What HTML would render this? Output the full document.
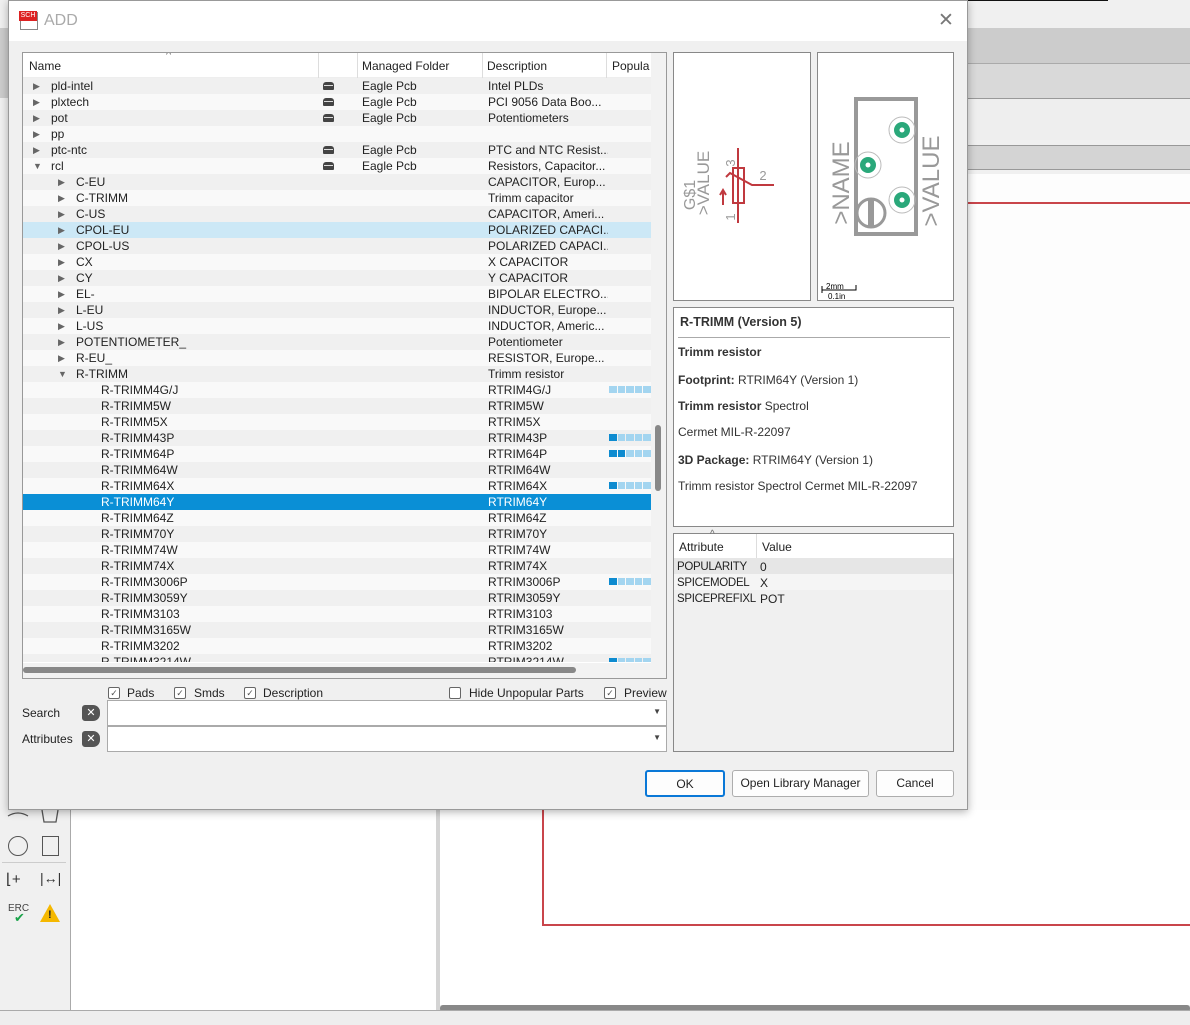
<!DOCTYPE html>
<html><head><meta charset="utf-8"><style>
*{margin:0;padding:0;box-sizing:border-box}
body{width:1190px;height:1025px;position:relative;overflow:hidden;background:#f0f0f0;font-family:"Liberation Sans","DejaVu Sans",sans-serif;font-size:12px;color:#222}
.a{position:absolute}
.r{position:absolute;left:0;width:628px;height:16px;line-height:16px;white-space:nowrap}
.r span{position:absolute;top:0}
.r .t{font-size:9px;color:#666}
.r .d{left:465px;width:120px;overflow:hidden}
.r .m{left:339px}
.r .k{left:300px;top:4px;width:11px;height:8px;background:#444;border-radius:3px 3px 1px 1px}
.r .k:after{content:"";position:absolute;left:1px;top:3px;width:9px;height:1px;background:#ddd}
.e{background:#f0f0f0}.o{background:#f9f9f9}
.p{position:absolute;left:586px;top:4px;height:7px;width:42px;display:flex;gap:1px}
.p i{flex:1;background:#a3d5f0}.p i.b{background:#0d8bd0}
.chk{position:absolute;width:12px;height:12px;border:1px solid #666;border-radius:2px;background:#fff;font-size:9px;line-height:10px;text-align:center;color:#555}
.btn{position:absolute;height:27px;border:1px solid #adadad;border-radius:3px;background:#fdfdfd;text-align:center;line-height:25px}
</style></head><body>
<!-- background app -->
<div class="a" style="left:808px;top:0;width:300px;height:1px;background:#111"></div>
<div class="a" style="left:968px;top:28px;width:222px;height:36px;background:#ccc;border-bottom:1px solid #aaa"></div>
<div class="a" style="left:968px;top:64px;width:222px;height:35px;background:#d9d9d9;border-bottom:1px solid #999"></div>
<div class="a" style="left:968px;top:99px;width:222px;height:41px;background:#eee"></div>
<div class="a" style="left:968px;top:145px;width:222px;height:25px;background:#d4d4d4;border-top:1px solid #999;border-bottom:1px solid #999"></div>
<div class="a" style="left:968px;top:174px;width:222px;height:830px;background:#fdfdfd"></div>
<div class="a" style="left:968px;top:202px;width:222px;height:2px;background:#c9454b"></div>
<div class="a" style="left:0;top:28px;width:8px;height:70px;background:#ccc"></div>
<div class="a" style="left:70px;top:810px;width:366px;height:200px;background:#fff;border-left:1px solid #aaa"></div>
<div class="a" style="left:436px;top:810px;width:4px;height:200px;background:#d4d4d4"></div>
<div class="a" style="left:440px;top:810px;width:750px;height:195px;background:#fff"></div>
<div class="a" style="left:542px;top:810px;width:2px;height:116px;background:#c9454b"></div>
<div class="a" style="left:543px;top:924px;width:647px;height:2px;background:#c9454b"></div>
<div class="a" style="left:440px;top:1005px;width:750px;height:7px;background:#888;border-radius:3px"></div>
<div class="a" style="left:0;top:1010px;width:1190px;height:15px;background:#eee;border-top:1px solid #aaa"></div>
<svg class="a" style="left:0;top:808px" width="70" height="22"><path d="M8 8 Q18 2 28 8" stroke="#555" fill="none" stroke-width="1.3"/><path d="M42 2 L44 14 L56 14 L58 2" stroke="#555" fill="none" stroke-width="1.3"/></svg>
<div class="a" style="left:2px;top:862px;width:64px;height:1px;background:#ccc"></div>
<div class="a" style="left:8px;top:836px;width:20px;height:20px;border:1.5px solid #555;border-radius:50%"></div>
<div class="a" style="left:42px;top:836px;width:17px;height:20px;border:1.5px solid #555"></div>
<div class="a" style="left:6px;top:870px;font-size:15px;color:#333">⌊+</div>
<div class="a" style="left:40px;top:870px;font-size:14px;color:#333">|↔|</div>
<div class="a" style="left:8px;top:903px;font-size:10px;color:#444">ERC</div>
<div class="a" style="left:14px;top:910px;font-size:13px;color:#1aa34a;font-weight:bold">✔</div>
<div class="a" style="left:40px;top:904px;width:0;height:0;border-left:10px solid transparent;border-right:10px solid transparent;border-bottom:18px solid #f5b800"></div>
<div class="a" style="left:48px;top:909px;font-size:11px;font-weight:bold">!</div>

<!-- dialog -->
<div class="a" style="left:8px;top:0;width:960px;height:810px;background:#f0f0f0;border:1px solid #999;box-shadow:0 2px 8px rgba(0,0,0,.3)">
<div class="a" style="left:0;top:0;width:958px;height:40px;background:#fff"></div>
<div class="a" style="left:11px;top:11px;width:18px;height:18px;border:1px solid #888;background:#fff"></div>
<div class="a" style="left:10px;top:10px;width:18px;height:10px;background:#d22;color:#fff;font-size:7px;line-height:10px;text-align:center">SCH</div>
<div class="a" style="left:35px;top:11px;font-size:16px;color:#aaa">ADD</div>
<div class="a" style="left:929px;top:8px;font-size:19px;color:#777">✕</div>
</div>

<!-- tree -->
<div class="a" style="left:22px;top:52px;width:645px;height:627px;background:#fff;border:1px solid #999;overflow:hidden">
<div class="a" style="left:0;top:0;width:643px;height:25px;background:#fff;border-bottom:1px solid #eee"></div>
<div class="a" style="left:6px;top:6px">Name</div>
<div class="a" style="left:143px;top:-4px;color:#666;font-size:11px">^</div>
<div class="a" style="left:295px;top:0;width:1px;height:25px;background:#ddd"></div>
<div class="a" style="left:334px;top:0;width:1px;height:25px;background:#ddd"></div>
<div class="a" style="left:339px;top:6px">Managed Folder</div>
<div class="a" style="left:459px;top:0;width:1px;height:25px;background:#ddd"></div>
<div class="a" style="left:464px;top:6px">Description</div>
<div class="a" style="left:583px;top:0;width:1px;height:25px;background:#ddd"></div>
<div class="a" style="left:589px;top:6px">Popula</div>
<div class="a" style="left:628px;top:0;width:16px;height:625px;background:#f2f2f2"></div>
<div class="a" style="left:632px;top:372px;width:6px;height:66px;background:#888;border-radius:3px"></div>
<div class="a" style="left:0;top:610px;width:628px;height:15px;background:#f2f2f2"></div>
<div class="a" style="left:0;top:614px;width:553px;height:6px;background:#888;border-radius:3px"></div>
<div class="a" style="left:0;top:25px;width:628px;height:584px;overflow:hidden">
<div class="r e" style="top:0"><span class="t" style="left:10px">▶</span><span style="left:28px">pld-intel</span><span class="k"></span><span class="m">Eagle Pcb</span><span class="d">Intel PLDs</span></div>
<div class="r o" style="top:16px"><span class="t" style="left:10px">▶</span><span style="left:28px">plxtech</span><span class="k"></span><span class="m">Eagle Pcb</span><span class="d">PCI 9056 Data Boo...</span></div>
<div class="r e" style="top:32px"><span class="t" style="left:10px">▶</span><span style="left:28px">pot</span><span class="k"></span><span class="m">Eagle Pcb</span><span class="d">Potentiometers</span></div>
<div class="r o" style="top:48px"><span class="t" style="left:10px">▶</span><span style="left:28px">pp</span></div>
<div class="r e" style="top:64px"><span class="t" style="left:10px">▶</span><span style="left:28px">ptc-ntc</span><span class="k"></span><span class="m">Eagle Pcb</span><span class="d">PTC and NTC Resist...</span></div>
<div class="r o" style="top:80px"><span class="t" style="left:10px">▼</span><span style="left:28px">rcl</span><span class="k"></span><span class="m">Eagle Pcb</span><span class="d">Resistors, Capacitor...</span></div>
<div class="r e" style="top:96px"><span class="t" style="left:35px">▶</span><span style="left:53px">C-EU</span><span class="d">CAPACITOR, Europ...</span></div>
<div class="r o" style="top:112px"><span class="t" style="left:35px">▶</span><span style="left:53px">C-TRIMM</span><span class="d">Trimm capacitor</span></div>
<div class="r e" style="top:128px"><span class="t" style="left:35px">▶</span><span style="left:53px">C-US</span><span class="d">CAPACITOR, Ameri...</span></div>
<div class="r" style="top:144px;background:#cce8f6"><span class="t" style="left:35px">▶</span><span style="left:53px">CPOL-EU</span><span class="d">POLARIZED CAPACI...</span></div>
<div class="r e" style="top:160px"><span class="t" style="left:35px">▶</span><span style="left:53px">CPOL-US</span><span class="d">POLARIZED CAPACI...</span></div>
<div class="r o" style="top:176px"><span class="t" style="left:35px">▶</span><span style="left:53px">CX</span><span class="d">X CAPACITOR</span></div>
<div class="r e" style="top:192px"><span class="t" style="left:35px">▶</span><span style="left:53px">CY</span><span class="d">Y CAPACITOR</span></div>
<div class="r o" style="top:208px"><span class="t" style="left:35px">▶</span><span style="left:53px">EL-</span><span class="d">BIPOLAR ELECTRO...</span></div>
<div class="r e" style="top:224px"><span class="t" style="left:35px">▶</span><span style="left:53px">L-EU</span><span class="d">INDUCTOR, Europe...</span></div>
<div class="r o" style="top:240px"><span class="t" style="left:35px">▶</span><span style="left:53px">L-US</span><span class="d">INDUCTOR, Americ...</span></div>
<div class="r e" style="top:256px"><span class="t" style="left:35px">▶</span><span style="left:53px">POTENTIOMETER_</span><span class="d">Potentiometer</span></div>
<div class="r o" style="top:272px"><span class="t" style="left:35px">▶</span><span style="left:53px">R-EU_</span><span class="d">RESISTOR, Europe...</span></div>
<div class="r e" style="top:288px"><span class="t" style="left:35px">▼</span><span style="left:53px">R-TRIMM</span><span class="d">Trimm resistor</span></div>
<div class="r o" style="top:304px"><span style="left:78px">R-TRIMM4G/J</span><span class="d">RTRIM4G/J</span><div class="p"><i></i><i></i><i></i><i></i><i></i></div></div>
<div class="r e" style="top:320px"><span style="left:78px">R-TRIMM5W</span><span class="d">RTRIM5W</span></div>
<div class="r o" style="top:336px"><span style="left:78px">R-TRIMM5X</span><span class="d">RTRIM5X</span></div>
<div class="r e" style="top:352px"><span style="left:78px">R-TRIMM43P</span><span class="d">RTRIM43P</span><div class="p"><i class="b"></i><i></i><i></i><i></i><i></i></div></div>
<div class="r o" style="top:368px"><span style="left:78px">R-TRIMM64P</span><span class="d">RTRIM64P</span><div class="p"><i class="b"></i><i class="b"></i><i></i><i></i><i></i></div></div>
<div class="r e" style="top:384px"><span style="left:78px">R-TRIMM64W</span><span class="d">RTRIM64W</span></div>
<div class="r o" style="top:400px"><span style="left:78px">R-TRIMM64X</span><span class="d">RTRIM64X</span><div class="p"><i class="b"></i><i></i><i></i><i></i><i></i></div></div>
<div class="r" style="top:416px;background:#0a8fd6;color:#fff"><span style="left:78px">R-TRIMM64Y</span><span class="d">RTRIM64Y</span></div>
<div class="r o" style="top:432px"><span style="left:78px">R-TRIMM64Z</span><span class="d">RTRIM64Z</span></div>
<div class="r e" style="top:448px"><span style="left:78px">R-TRIMM70Y</span><span class="d">RTRIM70Y</span></div>
<div class="r o" style="top:464px"><span style="left:78px">R-TRIMM74W</span><span class="d">RTRIM74W</span></div>
<div class="r e" style="top:480px"><span style="left:78px">R-TRIMM74X</span><span class="d">RTRIM74X</span></div>
<div class="r o" style="top:496px"><span style="left:78px">R-TRIMM3006P</span><span class="d">RTRIM3006P</span><div class="p"><i class="b"></i><i></i><i></i><i></i><i></i></div></div>
<div class="r e" style="top:512px"><span style="left:78px">R-TRIMM3059Y</span><span class="d">RTRIM3059Y</span></div>
<div class="r o" style="top:528px"><span style="left:78px">R-TRIMM3103</span><span class="d">RTRIM3103</span></div>
<div class="r e" style="top:544px"><span style="left:78px">R-TRIMM3165W</span><span class="d">RTRIM3165W</span></div>
<div class="r o" style="top:560px"><span style="left:78px">R-TRIMM3202</span><span class="d">RTRIM3202</span></div>
<div class="r e" style="top:576px"><span style="left:78px">R-TRIMM3214W</span><span class="d">RTRIM3214W</span><div class="p"><i class="b"></i><i></i><i></i><i></i><i></i></div></div>
</div>
</div>

<!-- bottom controls -->
<div class="chk" style="left:108px;top:687px">✓</div><div class="a" style="left:127px;top:686px">Pads</div>
<div class="chk" style="left:174px;top:687px">✓</div><div class="a" style="left:194px;top:686px">Smds</div>
<div class="chk" style="left:244px;top:687px">✓</div><div class="a" style="left:263px;top:686px">Description</div>
<div class="chk" style="left:449px;top:687px"></div><div class="a" style="left:469px;top:686px">Hide Unpopular Parts</div>
<div class="chk" style="left:604px;top:687px">✓</div><div class="a" style="left:624px;top:686px">Preview</div>
<div class="a" style="left:22px;top:706px">Search</div>
<div class="a" style="left:82px;top:705px;width:18px;height:16px;background:#555;color:#fff;border-radius:3px 7px 7px 3px;text-align:center;font-size:11px;font-weight:bold;line-height:16px">✕</div>
<div class="a" style="left:107px;top:700px;width:560px;height:26px;background:#fff;border:1px solid #aaa"><span class="a" style="right:5px;top:6px;font-size:8px;color:#444">▼</span></div>
<div class="a" style="left:22px;top:732px">Attributes</div>
<div class="a" style="left:82px;top:731px;width:18px;height:16px;background:#555;color:#fff;border-radius:3px 7px 7px 3px;text-align:center;font-size:11px;font-weight:bold;line-height:16px">✕</div>
<div class="a" style="left:107px;top:726px;width:560px;height:26px;background:#fff;border:1px solid #aaa"><span class="a" style="right:5px;top:6px;font-size:8px;color:#444">▼</span></div>

<!-- previews -->
<div class="a" style="left:673px;top:52px;width:138px;height:249px;background:#fff;border:1px solid #888">
<svg width="136" height="247" style="position:absolute;left:0;top:0">
<g stroke="#c0393f" stroke-width="2" fill="none">
<line x1="64" y1="95" x2="64" y2="170"/><rect x="59" y="115" width="11" height="35"/>
<polyline points="52,124 56,120 78,132 100,132"/><path d="M49 152 L49 138 M46 142 L49 137 L52 142"/></g>
<g fill="#999" font-family="Liberation Sans" font-size="16" text-anchor="middle">
<text transform="translate(35,130) rotate(-90)" x="0" y="0" font-size="17">&gt;VALUE</text>
<text transform="translate(21,142) rotate(-90)" font-size="16">G$1</text>
<text transform="translate(61,110) rotate(-90)" font-size="13">3</text>
<text transform="translate(61,164) rotate(-90)" font-size="13">1</text>
<text x="89" y="127" font-size="13">2</text></g></svg></div>
<div class="a" style="left:817px;top:52px;width:137px;height:249px;background:#fff;border:1px solid #888">
<svg width="135" height="247" style="position:absolute;left:0;top:0">
<rect x="38" y="46" width="60" height="135" stroke="#999" stroke-width="4" fill="none"/>
<circle cx="53" cy="160" r="14" stroke="#999" stroke-width="3" fill="none"/><rect x="50" y="146" width="6" height="28" fill="#999"/>
<g fill="none" stroke="#bbb"><circle cx="84" cy="77" r="13"/><circle cx="50" cy="112" r="13"/><circle cx="84" cy="147" r="13"/></g>
<g fill="#2aa87a"><circle cx="84" cy="77" r="8"/><circle cx="50" cy="112" r="8"/><circle cx="84" cy="147" r="8"/></g>
<g fill="#fff"><circle cx="84" cy="77" r="2.5"/><circle cx="50" cy="112" r="2.5"/><circle cx="84" cy="147" r="2.5"/></g>
<g fill="#999" font-family="Liberation Sans" text-anchor="middle" font-size="24">
<text transform="translate(31,130) rotate(-90)">&gt;NAME</text>
<text transform="translate(121,128) rotate(-90)">&gt;VALUE</text></g>
<path d="M4 240 L4 233 M4 237 L38 237 L38 232" stroke="#000" fill="none"/>
<text x="8" y="236" font-size="8" font-family="Liberation Sans">2mm</text><text x="10" y="246" font-size="8" font-family="Liberation Sans">0.1in</text>
</svg></div>

<!-- info -->
<div class="a" style="left:673px;top:307px;width:281px;height:220px;background:#fff;border:1px solid #888">
<div class="a" style="left:6px;top:7px;font-weight:bold;font-size:12.5px;color:#333">R-TRIMM (Version 5)</div>
<div class="a" style="left:4px;top:29px;width:272px;height:1px;background:#aaa"></div>
<div class="a" style="left:4px;top:37px;font-weight:bold;color:#333">Trimm resistor</div>
<div class="a" style="left:4px;top:65px;color:#333"><b>Footprint:</b> RTRIM64Y (Version 1)</div>
<div class="a" style="left:4px;top:91px;color:#333"><b>Trimm resistor</b> Spectrol</div>
<div class="a" style="left:4px;top:117px;color:#333">Cermet MIL-R-22097</div>
<div class="a" style="left:4px;top:145px;color:#333"><b>3D Package:</b> RTRIM64Y (Version 1)</div>
<div class="a" style="left:4px;top:171px;color:#333">Trimm resistor Spectrol Cermet MIL-R-22097</div>
</div>
<div class="a" style="left:673px;top:533px;width:281px;height:219px;background:#f0f0f0;border:1px solid #888">
<div class="a" style="left:0;top:0;width:279px;height:24px;background:#fff"></div>
<div class="a" style="left:82px;top:0;width:1px;height:24px;background:#ddd"></div>
<div class="a" style="left:5px;top:6px">Attribute</div><div class="a" style="left:36px;top:-5px;font-size:10px;color:#666">^</div>
<div class="a" style="left:88px;top:6px">Value</div>
<div class="a" style="left:0;top:24px;width:279px;height:16px;background:#e6e6e6"></div>
<div class="a" style="left:0;top:40px;width:279px;height:16px;background:#f5f5f5"></div>
<div class="a" style="left:3px;top:25px;line-height:16px;font-size:11.5px;letter-spacing:-0.3px">POPULARITY<br>SPICEMODEL<br>SPICEPREFIXL</div>
<div class="a" style="left:86px;top:25px;line-height:16px">0<br>X<br>POT</div>
</div>

<div class="btn" style="left:645px;top:770px;width:80px;border:2px solid #0a78d7">OK</div>
<div class="btn" style="left:732px;top:770px;width:137px">Open Library Manager</div>
<div class="btn" style="left:876px;top:770px;width:78px">Cancel</div>
</body></html>
